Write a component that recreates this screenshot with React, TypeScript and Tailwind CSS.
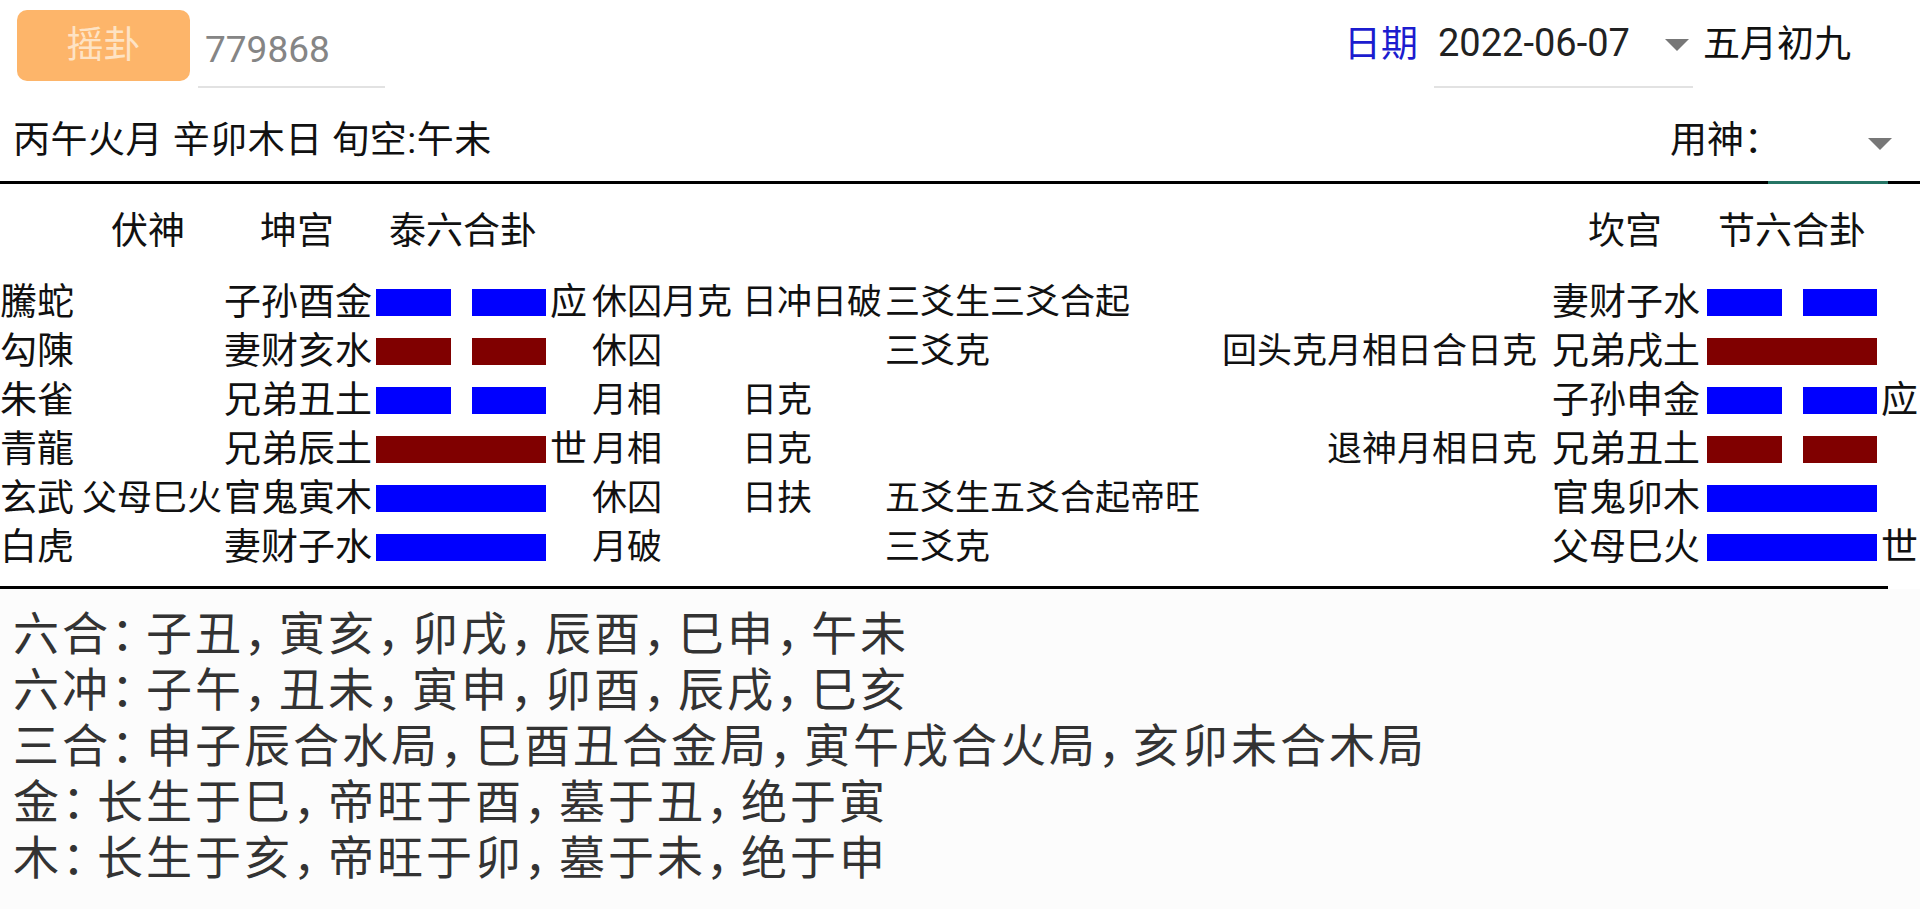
import React from "react";

type Row = {
  god: string;
  fu?: string;
  name: string;
  yin: boolean;
  color: "blue" | "red";
  sy?: string;
  a?: string;
  b?: string;
  c?: string;
  rAna?: string;
  rName: string;
  rYin: boolean;
  rColor: "blue" | "red";
  rSy?: string;
};

const rows: Row[] = [
  { god: "騰蛇", name: "子孙酉金", yin: true, color: "blue", sy: "应", a: "休囚月克", b: "日冲日破", c: "三爻生三爻合起", rName: "妻财子水", rYin: true, rColor: "blue" },
  { god: "勾陳", name: "妻财亥水", yin: true, color: "red", a: "休囚", c: "三爻克", rAna: "回头克月相日合日克", rName: "兄弟戌土", rYin: false, rColor: "red" },
  { god: "朱雀", name: "兄弟丑土", yin: true, color: "blue", a: "月相", b: "日克", rName: "子孙申金", rYin: true, rColor: "blue", rSy: "应" },
  { god: "青龍", name: "兄弟辰土", yin: false, color: "red", sy: "世", a: "月相", b: "日克", rAna: "退神月相日克", rName: "兄弟丑土", rYin: true, rColor: "red" },
  { god: "玄武", fu: "父母巳火", name: "官鬼寅木", yin: false, color: "blue", a: "休囚", b: "日扶", c: "五爻生五爻合起帝旺", rName: "官鬼卯木", rYin: false, rColor: "blue" },
  { god: "白虎", name: "妻财子水", yin: false, color: "blue", a: "月破", c: "三爻克", rName: "父母巳火", rYin: false, rColor: "blue", rSy: "世" },
];

const notes = [
  "六合：子丑，寅亥，卯戌，辰酉，巳申，午未",
  "六冲：子午，丑未，寅申，卯酉，辰戌，巳亥",
  "三合：申子辰合水局，巳酉丑合金局，寅午戌合火局，亥卯未合木局",
  "金：长生于巳，帝旺于酉，墓于丑，绝于寅",
  "木：长生于亥，帝旺于卯，墓于未，绝于申",
];

// full-width punctuation sits tighter than the characters in the notes
function NoteLine({ text }: { text: string }) {
  return (
    <div className="whitespace-nowrap">
      {Array.from(text).map((ch, i) =>
        ch === "，" || ch === "：" ? (
          <span key={i} className="tracking-[-11px]">
            {ch}
          </span>
        ) : (
          <span key={i}>{ch}</span>
        )
      )}
    </div>
  );
}

function Bar({ yin, color }: { yin: boolean; color: "blue" | "red" }) {
  const bg = color === "blue" ? "bg-[#0000ff]" : "bg-[#800000]";
  if (yin) {
    return (
      <div className="flex w-[170px] justify-between">
        <div className={`h-[27px] w-[75px] ${bg}`} />
        <div className={`h-[27px] w-[74px] ${bg}`} />
      </div>
    );
  }
  return <div className={`h-[27px] w-[170px] ${bg}`} />;
}

function Caret() {
  return (
    <svg width="24" height="12" viewBox="0 0 24 12">
      <polygon points="0,0 24,0 12,12" fill="#777777" />
    </svg>
  );
}

export default function App() {
  return (
    <div
      lang="zh-CN"
      className="h-[909px] w-[1920px] overflow-hidden bg-white text-[#111]"
      style={{ fontFamily: 'Roboto, "Noto Sans CJK SC", sans-serif' }}
    >
      {/* top bar */}
      <div className="flex h-[92px] items-start pt-[10px]">
        <button className="ml-[17px] flex h-[71px] w-[173px] items-center justify-center rounded-[10px] bg-[#fdb56a] text-[37px] leading-none text-[#fee3c4]">
          摇卦
        </button>
        <div className="ml-[8px] flex h-[78px] w-[187px] items-center border-b-2 border-[#e2e2e2] pl-[7px] pt-[2px] text-[37px] leading-none text-[#858585]">
          779868
        </div>
        <div className="ml-auto flex items-start pr-[69px]">
          <div className="flex h-[68px] items-center text-[37px] leading-none text-[#1c1ccf]">日期</div>
          <div className="ml-[16px] flex h-[78px] w-[259px] items-center border-b-2 border-[#e2e2e2] pb-[10px]">
            <span className="ml-[4px] text-[38px] leading-none text-[#222]">2022-06-07</span>
            <span className="ml-auto mr-[4px] mt-[4px]">
              <Caret />
            </span>
          </div>
          <div className="ml-[10px] flex h-[68px] items-center text-[37px] leading-none">五月初九</div>
        </div>
      </div>

      {/* ganzhi line */}
      <div className="flex h-[89px] items-center pt-[8px]">
        <div className="pl-[13px] text-[37px] leading-none tracking-[0.5px]">丙午火月 辛卯木日 旬空:午未</div>
        <div className="ml-auto flex items-center pr-[28px]">
          <span className="text-[37px] leading-none">用神：</span>
          <span className="ml-[87px] mt-[6px]">
            <Caret />
          </span>
        </div>
      </div>

      <div className="flex h-[3px]">
        <div className="flex-1 bg-black" />
        <div className="w-[120px] bg-[#267565]" />
        <div className="w-[32px] bg-black" />
      </div>

      {/* gua table */}
      <div className="text-[37px] leading-none">
        <div className="flex h-[94px] items-center">
          <div className="w-[74px]" />
          <div className="w-[148px] text-center">伏神</div>
          <div className="w-[150px] text-center">坤宫</div>
          <div className="w-[178px] pl-[4px] text-center">泰六合卦</div>
          <div className="ml-auto flex">
            <div className="w-[163px] pl-[13px] text-center">坎宫</div>
            <div className="w-[177px] pl-[7px] text-center">节六合卦</div>
            <div className="w-[43px]" />
          </div>
        </div>

        {rows.map((r, i) => (
          <div key={i} className="flex h-[49px] items-center">
            <div className="w-[74px] whitespace-nowrap">{r.god}</div>
            <div className="w-[148px] whitespace-nowrap text-right text-[35px]">{r.fu}</div>
            <div className="w-[150px] whitespace-nowrap text-right">{r.name}</div>
            <div className="w-[178px] pl-[4px]">
              <Bar yin={r.yin} color={r.color} />
            </div>
            <div className="w-[42px]">{r.sy}</div>
            <div className="w-[150px] whitespace-nowrap text-[35px]">{r.a}</div>
            <div className="w-[143px] whitespace-nowrap text-[35px]">{r.b}</div>
            <div className="flex-1 whitespace-nowrap text-[35px]">{r.c}</div>
            <div className="flex items-center">
              <div className="whitespace-nowrap text-right text-[35px]">{r.rAna}</div>
              <div className="w-[163px] whitespace-nowrap text-right">{r.rName}</div>
              <div className="w-[177px] pl-[7px]">
                <Bar yin={r.rYin} color={r.rColor} />
              </div>
              <div className="w-[43px] pl-[4px]">{r.rSy}</div>
            </div>
          </div>
        ))}
      </div>

      <div className="mt-[14px] h-[3px] w-[1888px] bg-black" />

      {/* notes */}
      <div className="h-[400px] bg-[#fcfcfc] pl-[13px] pt-[17px] text-[46px] leading-[56px] tracking-[3px] text-[#333]">
        {notes.map((n) => (
          <NoteLine key={n} text={n} />
        ))}
        <div className="mt-[20px]">
          <NoteLine text="水：长生于申，帝旺于子，墓于辰，绝于巳" />
        </div>
      </div>
    </div>
  );
}
